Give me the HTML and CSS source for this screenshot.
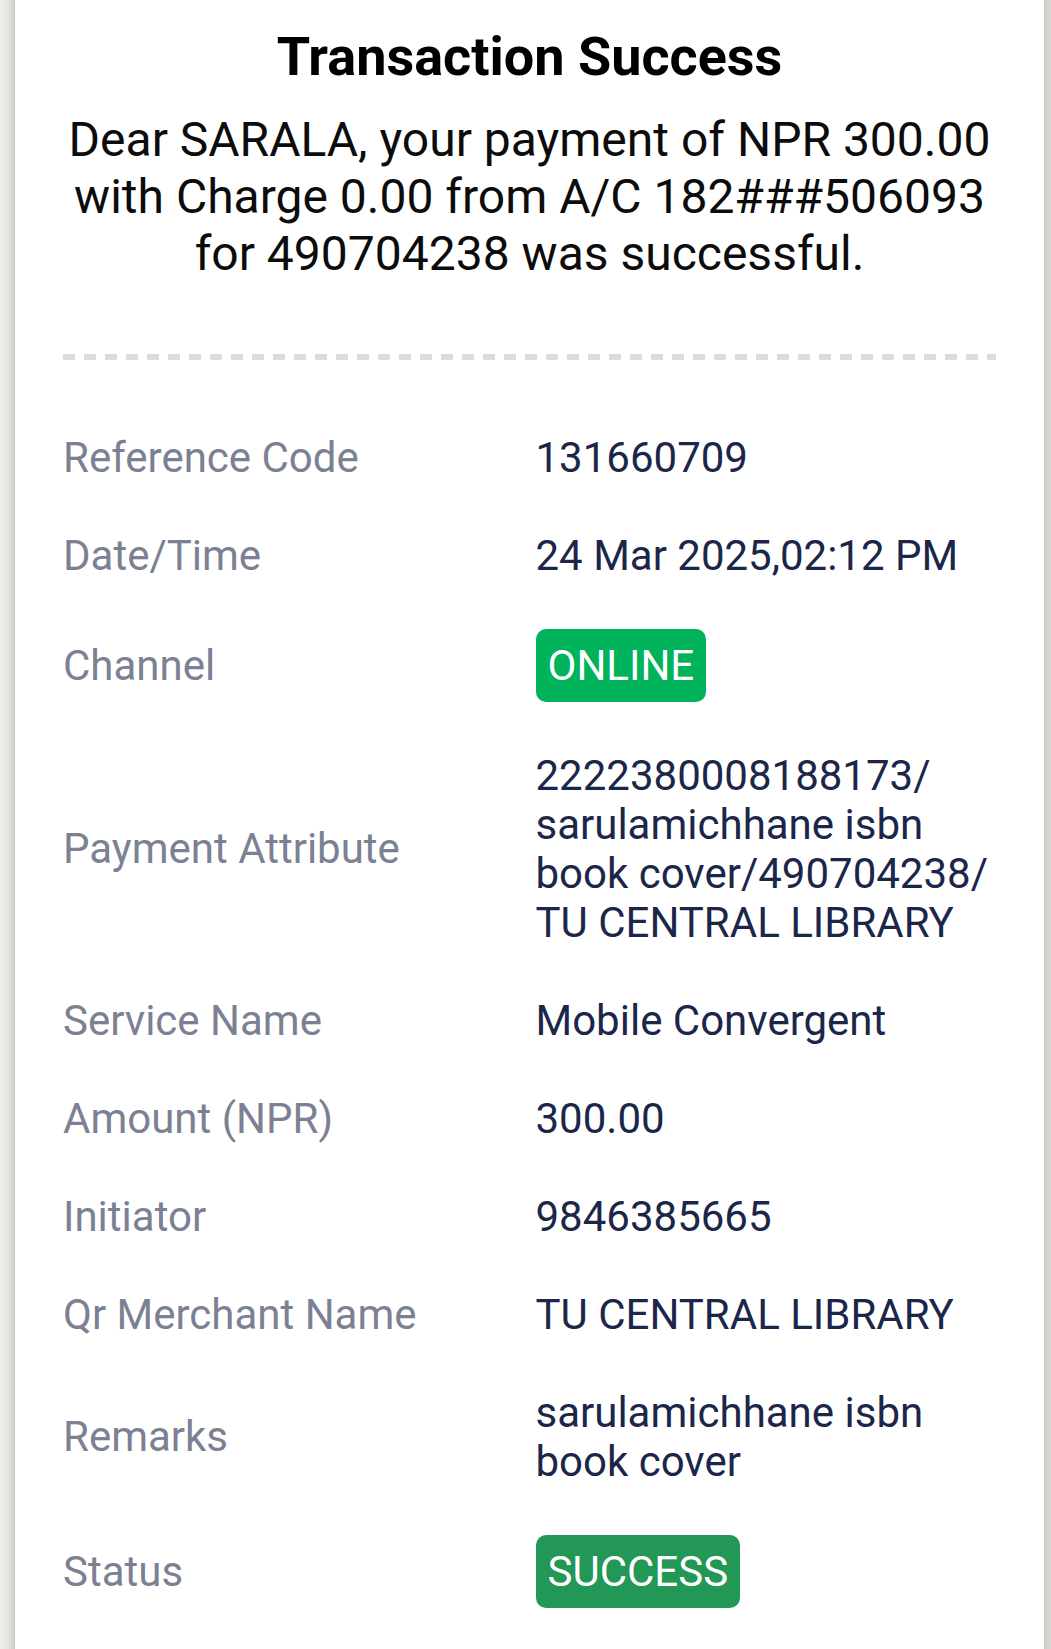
FILE: index.html
```html
<!DOCTYPE html>
<html lang="en">
<head>
<meta charset="utf-8">
<title>Transaction Success</title>
<link rel="stylesheet" href="styles.css">
</head>
<body>
<div class="screen">
  <div class="edge edge-left"></div>
  <main class="card">
    <h1 class="title">Transaction Success</h1>
    <p class="message">Dear SARALA, your payment of NPR 300.00 with Charge 0.00 from A/C 182###506093 for 490704238 was successful.</p>
    <div class="divider"></div>
    <dl class="details">
      <div class="row"><dt class="label">Reference Code</dt><dd class="value">131660709</dd></div>
      <div class="row"><dt class="label">Date/Time</dt><dd class="value">24 Mar 2025,02:12 PM</dd></div>
      <div class="row"><dt class="label">Channel</dt><dd class="value"><span class="badge badge-online">ONLINE</span></dd></div>
      <div class="row"><dt class="label">Payment Attribute</dt><dd class="value">2222380008188173/<wbr>sarulamichhane isbn book cover/490704238/<wbr>TU CENTRAL LIBRARY</dd></div>
      <div class="row"><dt class="label">Service Name</dt><dd class="value">Mobile Convergent</dd></div>
      <div class="row"><dt class="label">Amount (NPR)</dt><dd class="value">300.00</dd></div>
      <div class="row"><dt class="label">Initiator</dt><dd class="value">9846385665</dd></div>
      <div class="row"><dt class="label">Qr Merchant Name</dt><dd class="value">TU CENTRAL LIBRARY</dd></div>
      <div class="row"><dt class="label">Remarks</dt><dd class="value">sarulamichhane isbn book cover</dd></div>
      <div class="row"><dt class="label">Status</dt><dd class="value"><span class="badge badge-success">SUCCESS</span></dd></div>
    </dl>
  </main>
  <div class="edge edge-right"></div>
</div>
</body>
</html>
```
FILE: styles.css
```css
html, body {
  margin: 0;
  padding: 0;
  background: #ffffff;
}

body {
  font-family: Roboto, "Noto Sans", "Liberation Sans", sans-serif;
}

.screen {
  display: flex;
  min-height: 1649px;
}

.edge {
  flex: 0 0 auto;
}

.edge-left {
  width: 15px;
  background: linear-gradient(to right, #eceee9 0%, #e2e4de 60%, #c9ccc5 100%);
}

.edge-right {
  width: 7px;
  background: linear-gradient(to right, #c9ccc5 0%, #d8dad4 100%);
}

.card {
  flex: 1 1 auto;
  background: #ffffff;
  padding: 25px 48px 0;
}

.title {
  margin: 0;
  font-size: 54px;
  font-weight: 700;
  line-height: normal;
  text-align: center;
  color: #000000;
}

.message {
  margin: 23px 0 0;
  font-size: 48px;
  line-height: normal;
  text-align: center;
  color: #0c0c0c;
}

.divider {
  margin-top: 72px;
  height: 6px;
  background: repeating-linear-gradient(to right, #dbdce0 0 12px, transparent 12px 21px);
}

.details {
  margin: 48px 0 0;
  padding: 0;
}

.row {
  display: grid;
  grid-template-columns: 1fr 1fr;
  column-gap: 12px;
  align-items: center;
  padding: 24.5px 0;
}

.label,
.value {
  margin: 0;
  font-size: 42px;
  line-height: normal;
}

.label {
  color: #7b8193;
}

.value {
  color: #1b2649;
}

.badge {
  display: inline-block;
  padding: 12px;
  border-radius: 10px;
  color: #ffffff;
  vertical-align: top;
}

.badge-online {
  background: #00b35b;
}

.badge-success {
  background: #239756;
}
```
